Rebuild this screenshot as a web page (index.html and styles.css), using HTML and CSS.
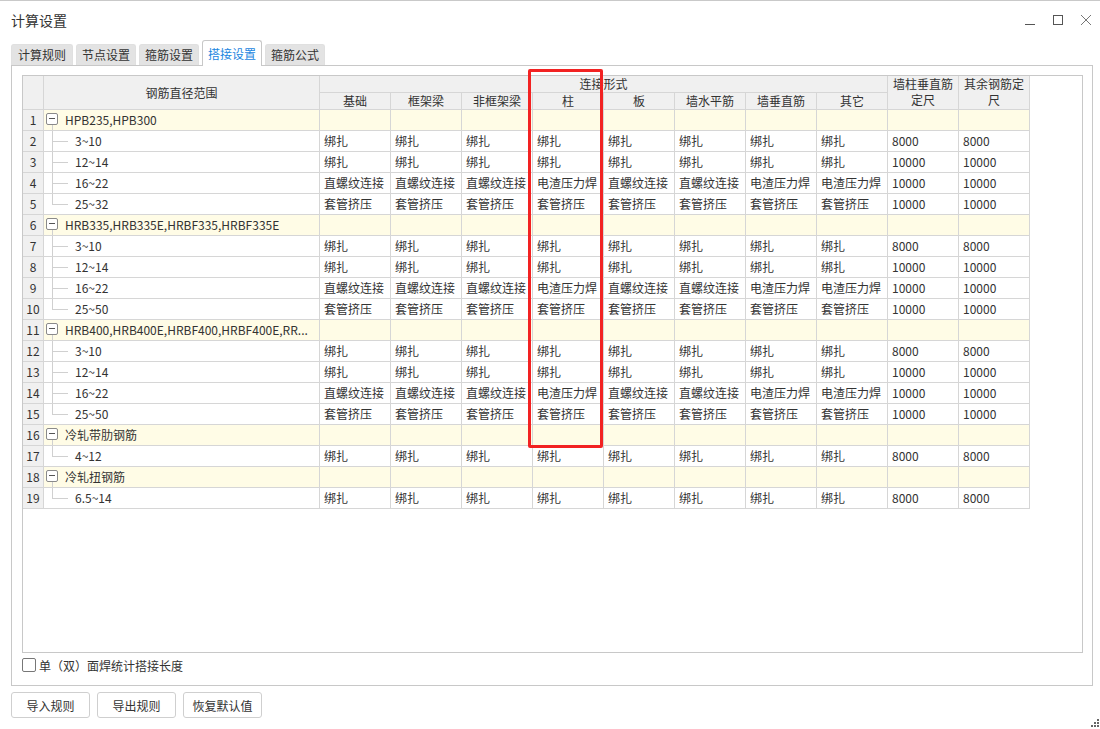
FILE: index.html
```html
<!DOCTYPE html>
<html lang="zh-CN">
<head>
<meta charset="utf-8">
<title>计算设置</title>
<link rel="stylesheet" href="styles.css">
</head>
<body>
<div class="window">
  <div class="titlebar">
    <span class="title">计算设置</span>
    <div class="controls">
      <svg class="ctl" width="12" height="12" viewBox="0 0 12 12"><path d="M1 10.5H11" stroke="#555" stroke-width="1"/></svg>
      <svg class="ctl" width="12" height="12" viewBox="0 0 12 12"><rect x="1.5" y="1.5" width="9" height="9" fill="none" stroke="#555" stroke-width="1"/></svg>
      <svg class="ctl" width="12" height="12" viewBox="0 0 12 12"><path d="M1 1L11 11M11 1L1 11" stroke="#777" stroke-width="1"/></svg>
    </div>
  </div>

  <div class="tabs">
    <div class="tab first">计算规则</div>
    <div class="tab">节点设置</div>
    <div class="tab">箍筋设置</div>
    <div class="tab active">搭接设置</div>
    <div class="tab">箍筋公式</div>
  </div>

  <div class="panel">
    <div class="gridbox">
      <div class="grid">
        <div class="h corner"></div>
        <div class="h span2">钢筋直径范围</div>
        <div class="h wide">连接形式</div>
        <div class="h span2 wrap">墙柱垂直筋定尺</div>
        <div class="h span2 wrap">其余钢筋定尺</div>
        <div class="h">基础</div>
        <div class="h">框架梁</div>
        <div class="h">非框架梁</div>
        <div class="h">柱</div>
        <div class="h">板</div>
        <div class="h">墙水平筋</div>
        <div class="h">墙垂直筋</div>
        <div class="h">其它</div>

        <div class="r g"><div class="n">1</div><div class="name"><span class="box"></span>HPB235,HPB300</div><div></div><div></div><div></div><div></div><div></div><div></div><div></div><div></div><div></div><div></div></div>
        <div class="r"><div class="n">2</div><div class="t">3~10</div><div>绑扎</div><div>绑扎</div><div>绑扎</div><div>绑扎</div><div>绑扎</div><div>绑扎</div><div>绑扎</div><div>绑扎</div><div>8000</div><div>8000</div></div>
        <div class="r"><div class="n">3</div><div class="t">12~14</div><div>绑扎</div><div>绑扎</div><div>绑扎</div><div>绑扎</div><div>绑扎</div><div>绑扎</div><div>绑扎</div><div>绑扎</div><div>10000</div><div>10000</div></div>
        <div class="r"><div class="n">4</div><div class="t">16~22</div><div>直螺纹连接</div><div>直螺纹连接</div><div>直螺纹连接</div><div>电渣压力焊</div><div>直螺纹连接</div><div>直螺纹连接</div><div>电渣压力焊</div><div>电渣压力焊</div><div>10000</div><div>10000</div></div>
        <div class="r"><div class="n">5</div><div class="t last">25~32</div><div>套管挤压</div><div>套管挤压</div><div>套管挤压</div><div>套管挤压</div><div>套管挤压</div><div>套管挤压</div><div>套管挤压</div><div>套管挤压</div><div>10000</div><div>10000</div></div>

        <div class="r g"><div class="n">6</div><div class="name"><span class="box"></span>HRB335,HRB335E,HRBF335,HRBF335E</div><div></div><div></div><div></div><div></div><div></div><div></div><div></div><div></div><div></div><div></div></div>
        <div class="r"><div class="n">7</div><div class="t">3~10</div><div>绑扎</div><div>绑扎</div><div>绑扎</div><div>绑扎</div><div>绑扎</div><div>绑扎</div><div>绑扎</div><div>绑扎</div><div>8000</div><div>8000</div></div>
        <div class="r"><div class="n">8</div><div class="t">12~14</div><div>绑扎</div><div>绑扎</div><div>绑扎</div><div>绑扎</div><div>绑扎</div><div>绑扎</div><div>绑扎</div><div>绑扎</div><div>10000</div><div>10000</div></div>
        <div class="r"><div class="n">9</div><div class="t">16~22</div><div>直螺纹连接</div><div>直螺纹连接</div><div>直螺纹连接</div><div>电渣压力焊</div><div>直螺纹连接</div><div>直螺纹连接</div><div>电渣压力焊</div><div>电渣压力焊</div><div>10000</div><div>10000</div></div>
        <div class="r"><div class="n">10</div><div class="t last">25~50</div><div>套管挤压</div><div>套管挤压</div><div>套管挤压</div><div>套管挤压</div><div>套管挤压</div><div>套管挤压</div><div>套管挤压</div><div>套管挤压</div><div>10000</div><div>10000</div></div>

        <div class="r g"><div class="n">11</div><div class="name"><span class="box"></span>HRB400,HRB400E,HRBF400,HRBF400E,RR...</div><div></div><div></div><div></div><div></div><div></div><div></div><div></div><div></div><div></div><div></div></div>
        <div class="r"><div class="n">12</div><div class="t">3~10</div><div>绑扎</div><div>绑扎</div><div>绑扎</div><div>绑扎</div><div>绑扎</div><div>绑扎</div><div>绑扎</div><div>绑扎</div><div>8000</div><div>8000</div></div>
        <div class="r"><div class="n">13</div><div class="t">12~14</div><div>绑扎</div><div>绑扎</div><div>绑扎</div><div>绑扎</div><div>绑扎</div><div>绑扎</div><div>绑扎</div><div>绑扎</div><div>10000</div><div>10000</div></div>
        <div class="r"><div class="n">14</div><div class="t">16~22</div><div>直螺纹连接</div><div>直螺纹连接</div><div>直螺纹连接</div><div>电渣压力焊</div><div>直螺纹连接</div><div>直螺纹连接</div><div>电渣压力焊</div><div>电渣压力焊</div><div>10000</div><div>10000</div></div>
        <div class="r"><div class="n">15</div><div class="t last">25~50</div><div>套管挤压</div><div>套管挤压</div><div>套管挤压</div><div>套管挤压</div><div>套管挤压</div><div>套管挤压</div><div>套管挤压</div><div>套管挤压</div><div>10000</div><div>10000</div></div>

        <div class="r g"><div class="n">16</div><div class="name"><span class="box"></span>冷轧带肋钢筋</div><div></div><div></div><div></div><div></div><div></div><div></div><div></div><div></div><div></div><div></div></div>
        <div class="r"><div class="n">17</div><div class="t last">4~12</div><div>绑扎</div><div>绑扎</div><div>绑扎</div><div>绑扎</div><div>绑扎</div><div>绑扎</div><div>绑扎</div><div>绑扎</div><div>8000</div><div>8000</div></div>

        <div class="r g"><div class="n">18</div><div class="name"><span class="box"></span>冷轧扭钢筋</div><div></div><div></div><div></div><div></div><div></div><div></div><div></div><div></div><div></div><div></div></div>
        <div class="r"><div class="n">19</div><div class="t last">6.5~14</div><div>绑扎</div><div>绑扎</div><div>绑扎</div><div>绑扎</div><div>绑扎</div><div>绑扎</div><div>绑扎</div><div>绑扎</div><div>8000</div><div>8000</div></div>
      </div>
      <div class="highlight"></div>
    </div>
    <label class="check"><span class="cb"></span>单（双）面焊统计搭接长度</label>
  </div>

  <div class="buttons">
    <button class="btn">导入规则</button>
    <button class="btn">导出规则</button>
    <button class="btn">恢复默认值</button>
  </div>

  <svg class="grip" width="8" height="8" viewBox="0 0 8 8">
    <rect x="6" y="0" width="2" height="2" fill="#666"/>
    <rect x="3" y="3" width="2" height="2" fill="#666"/>
    <rect x="6" y="3" width="2" height="2" fill="#666"/>
    <rect x="0" y="6" width="2" height="2" fill="#666"/>
    <rect x="3" y="6" width="2" height="2" fill="#666"/>
    <rect x="6" y="6" width="2" height="2" fill="#666"/>
  </svg>
</div>
</body>
</html>
```

FILE: styles.css
```css
* { box-sizing: border-box; }
html, body { margin: 0; padding: 0; background: #fff; }
body {
  font-family: "Noto Sans CJK SC", "Noto Sans", sans-serif;
  font-size: 12px;
  color: #333;
}
.window {
  position: relative;
  width: 1100px;
  height: 729px;
  border-top: 1px solid #c9c9c9;
  padding: 0 8px 0 11px;
}
.titlebar {
  height: 39px;
  display: flex;
  align-items: center;
  justify-content: space-between;
}
.title { font-size: 14px; color: #333; margin-top: -1px; }
.controls { display: flex; gap: 16px; margin-top: -1px; }
.ctl { display: block; }

.tabs {
  display: flex;
  align-items: flex-end;
  gap: 3px;
  height: 25px;
  position: relative;
  z-index: 2;
}
.tab {
  height: 21px;
  padding: 0 5px;
  background: #e3e3e3;
  border: 1px solid #e0e0e0;
  border-bottom: none;
  border-radius: 3px 3px 0 0;
  line-height: 20px;
  color: #333;
  white-space: nowrap;
}
.tab.first { padding: 0 6px; }
.tab.active {
  height: 26px;
  margin-bottom: -1px;
  background: #fff;
  border-color: #c8c8c8;
  color: #1c86e0;
  line-height: 25px;
}

.panel {
  width: 1082px;
  border: 1px solid #c8c8c8;
  padding: 9px 9px 12px 10px;
  position: relative;
  z-index: 1;
}
.gridbox {
  position: relative;
  height: 578px;
  border: 1px solid #c8c8c8;
}
.grid {
  display: grid;
  grid-template-columns: 21px 276px repeat(10, 71px);
  grid-template-rows: 17px 17px;
  grid-auto-rows: 21px;
  width: 1007px;
}
.grid > div, .r > div {
  border-right: 1px solid #d6d6d6;
  border-bottom: 1px solid #d6d6d6;
  white-space: nowrap;
}
.h {
  background: #f0f0f0;
  text-align: center;
  line-height: 16px;
  color: #333;
}
.h.corner, .h.span2 { grid-row: span 2; line-height: 33px; }
.h.wrap { white-space: normal !important; line-height: 16px; }
.h.wide { grid-column: span 8; }

.r { display: contents; }
.r > div {
  line-height: 20px;
  padding: 0 4px;
  background: #fff;
}
.r.g > div { background: #fffce6; }
.r > .n {
  background: #f0f0f0 !important;
  text-align: center;
  padding: 0;
}
.r > .name {
  position: relative;
  padding-left: 21px;
}
.box {
  position: absolute;
  left: 2px;
  top: 3px;
  width: 12px;
  height: 12px;
  border: 1px solid #8a8a8a;
  border-radius: 2px;
  background: #fff;
}
.box::after {
  content: "";
  position: absolute;
  left: 2px;
  top: 4px;
  width: 6px;
  height: 1px;
  background: #555;
}
.r > .name::after {
  content: "";
  position: absolute;
  left: 8px;
  top: 15px;
  bottom: 0;
  width: 1px;
  background: #d0d0d0;
}
.r > .t {
  position: relative;
  padding-left: 31px;
}
.t::before {
  content: "";
  position: absolute;
  left: 8px;
  top: 0;
  bottom: 0;
  width: 1px;
  background: #d0d0d0;
}
.t.last::before { bottom: 50%; }
.t::after {
  content: "";
  position: absolute;
  left: 8px;
  top: 10px;
  width: 16px;
  height: 1px;
  background: #d0d0d0;
}

.highlight {
  position: absolute;
  left: 505px;
  top: -7px;
  width: 75px;
  height: 379px;
  border: 3px solid #f22222;
  border-radius: 2px;
  pointer-events: none;
}

.check {
  display: flex;
  align-items: center;
  height: 16px;
  margin-top: 4px;
  gap: 3px;
  color: #333;
}
.cb {
  width: 14px;
  height: 14px;
  border: 1px solid #777;
  border-radius: 2px;
  background: #fff;
}

.buttons {
  display: flex;
  gap: 7px;
  margin-top: 6px;
}
.btn {
  font-family: inherit;
  font-size: 12px;
  color: #333;
  height: 26px;
  width: 79px;
  background: #fff;
  border: 1px solid #cfcfcf;
  border-radius: 3px;
  padding: 0;
}
.grip {
  position: absolute;
  right: 1px;
  bottom: 2px;
}
```
